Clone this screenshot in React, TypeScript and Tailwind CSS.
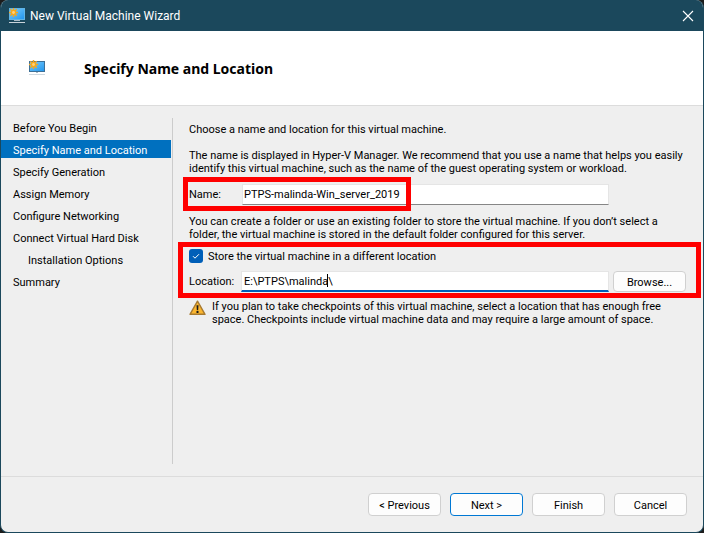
import type { ReactNode } from "react";

const steps = [
  { label: "Before You Begin" },
  { label: "Specify Name and Location", current: true },
  { label: "Specify Generation" },
  { label: "Assign Memory" },
  { label: "Configure Networking" },
  { label: "Connect Virtual Hard Disk" },
  { label: "Installation Options", nested: true },
  { label: "Summary" },
];

function MonitorIcon({ light = false }: { light?: boolean }) {
  const fill = light ? "screen-light" : "screen-dark";
  return (
    <svg viewBox="0 0 16 16" className="size-4 shrink-0" aria-hidden="true">
      <defs>
        <linearGradient id={fill} x1="0" y1="0" x2="1" y2="1">
          <stop offset="0" stopColor="#7acbfa" />
          <stop offset="1" stopColor="#2397ee" />
        </linearGradient>
      </defs>
      <rect x="0" y={light ? 0 : 1} width="16" height={light ? 12 : 11} fill={light ? "#5fb4e6" : "#3d6f96"} />
      <rect x="1" y={light ? 1 : 2} width="14" height={light ? 10 : 9} fill={`url(#${fill})`} />
      <rect x={light ? 5 : 7} y="12" width={light ? 6 : 2} height="1" fill="#a9bac5" />
      <rect x="0" y="14" width="16" height="1" fill={light ? "#c9d3da" : "#cfd8df"} />
      <path
        d="M4.500 0v9M0 4.500h9M1.300 1.300l6.400 6.400M7.700 1.300L1.300 7.700"
        stroke="#f5a81c"
        strokeWidth="1.500"
      />
      <circle cx="4.500" cy="4.500" r="2.700" fill="#f5a81c" />
      <circle cx="4.500" cy="4.500" r="1.400" fill="#ffd27a" />
    </svg>
  );
}

function WarningIcon() {
  return (
    <svg viewBox="0 0 17 16" className="h-4 w-[17px] shrink-0" aria-hidden="true">
      <path
        d="M8.500 1.200L16 14.300H1z"
        fill="#fbb62f"
        stroke="#a87a30"
        strokeWidth="1.400"
        strokeLinejoin="round"
      />
      <path d="M7.500 5.200h2l-.3 5h-1.400z" fill="#1a1a1a" />
      <rect x="7.500" y="11" width="2" height="2" fill="#1a1a1a" />
    </svg>
  );
}

function Button({ children, className }: { children: ReactNode; className: string }) {
  return (
    <button type="button" className={`rounded border bg-[#fdfdfd] pt-px text-center text-black ${className}`}>
      {children}
    </button>
  );
}

export default function App() {
  return (
    <div className="min-h-screen bg-[#1c1c1c]">
      <div className="flex min-h-screen flex-col overflow-hidden rounded-lg border border-t-0 border-[#1b485c] bg-[#efefef] font-[Roboto,sans-serif] text-[11px] leading-[13px] text-black">
        <header className="flex h-[31px] items-center bg-[#1b485c] pr-[9px] pl-2">
          <MonitorIcon light />
          <h1 className="ml-[5px] flex-1 text-xs text-white">New Virtual Machine Wizard</h1>
          <button type="button" aria-label="Close" className="flex size-3 items-center justify-center text-white">
            <svg viewBox="0 0 12 12" className="size-3" aria-hidden="true">
              <path d="M1 1l10 10M11 1L1 11" stroke="currentColor" strokeWidth="1.100" />
            </svg>
          </button>
        </header>

        <div className="flex h-[75px] items-center border-b border-[#dcdcdc] bg-white pl-7">
          <MonitorIcon />
          <h2 className="ml-[39px] pt-0.5 font-['Noto_Sans',sans-serif] text-sm font-bold">
            Specify Name and Location
          </h2>
        </div>

        <div className="flex flex-1">
          <nav aria-label="Steps" className="w-[171px] shrink-0 pt-3">
            <ul className="flex flex-col gap-1">
              {steps.map((s) => (
                <li key={s.label}>
                  <a
                    href="#"
                    aria-current={s.current ? "step" : undefined}
                    className={`block h-[18px] leading-[22px] whitespace-nowrap ${
                      s.current ? "mr-px bg-[#0070bf] text-white" : ""
                    } ${s.nested ? "pl-[27px]" : "pl-3"}`}
                  >
                    {s.label}
                  </a>
                </li>
              ))}
            </ul>
          </nav>
          <div className="mt-3 mb-3 w-px bg-[#cccccc]" />

          <main className="flex-1 pt-[17px] pr-[17px] pl-4">
            <p>Choose a name and location for this virtual machine.</p>
            <p className="mt-[13px]">
              The name is displayed in Hyper-V Manager. We recommend that you use a name that helps you easily
              <br />
              identify this virtual machine, such as the name of the guest operating system or workload.
            </p>

            <div className="relative mt-[9px] flex items-center pr-[77px]">
              <label htmlFor="vm-name" className="w-[53px] shrink-0">
                Name:
              </label>
              <input
                id="vm-name"
                type="text"
                defaultValue="PTPS-malinda-Win_server_2019"
                className="h-[21px] min-w-0 flex-1 border border-[#e5e5e5] border-b-[#868686] bg-white px-px outline-none"
              />
              <div className="pointer-events-none absolute -top-[7px] -left-[6px] h-[34px] w-[228px] border-[5px] border-[#ff0000]" />
            </div>

            <p className="mt-[10px]">
              You can create a folder or use an existing folder to store the virtual machine. If you don’t select a
              <br />
              folder, the virtual machine is stored in the default folder configured for this server.
            </p>

            <div className="relative mt-2">
              <label className="flex items-center gap-[5px]">
                <span className="relative flex size-[14px]">
                  <input
                    type="checkbox"
                    defaultChecked
                    className="size-[14px] appearance-none rounded-[3px] bg-[#005fb8]"
                  />
                  <svg viewBox="0 0 14 14" className="pointer-events-none absolute inset-0" aria-hidden="true">
                    <path d="M4 7.200l2 2 4-4" fill="none" stroke="#fff" strokeWidth="1" />
                  </svg>
                </span>
                Store the virtual machine in a different location
              </label>
              <div className="mt-2 flex items-center">
                <label htmlFor="vm-location" className="w-[52px] shrink-0">
                  Location:
                </label>
                <div className="relative flex flex-1">
                  <input
                    id="vm-location"
                    type="text"
                    defaultValue="E:\PTPS\malinda\"
                    className="h-[21px] min-w-0 flex-1 border border-b-2 border-[#e5e5e5] border-b-[#005fb8] bg-white px-[2px] outline-none"
                  />
                  <span className="absolute top-[3px] left-[86px] h-[13px] w-px bg-black" />
                </div>
                <Button className="ml-1 h-[21px] w-[73px] border-[#d0d0d0]">Browse...</Button>
              </div>
              <div className="pointer-events-none absolute -top-[7px] -right-[15px] -left-[11px] h-14 border-[5px] border-[#ff0000]" />
            </div>

            <div className="mt-2 flex gap-[6px]">
              <WarningIcon />
              <p>
                If you plan to take checkpoints of this virtual machine, select a location that has enough free
                <br />
                space. Checkpoints include virtual machine data and may require a large amount of space.
              </p>
            </div>
          </main>
        </div>

        <footer className="flex h-14 items-center justify-end gap-[9px] border-t border-[#dcdcdc] pr-4">
          <Button className="h-[23px] w-[73px] border-[#d0d0d0]">&lt; Previous</Button>
          <Button className="h-[23px] w-[73px] border-[#0078d4]">Next &gt;</Button>
          <Button className="h-[23px] w-[73px] border-[#d0d0d0]">Finish</Button>
          <Button className="h-[23px] w-[73px] border-[#d0d0d0]">Cancel</Button>
        </footer>
      </div>
    </div>
  );
}
